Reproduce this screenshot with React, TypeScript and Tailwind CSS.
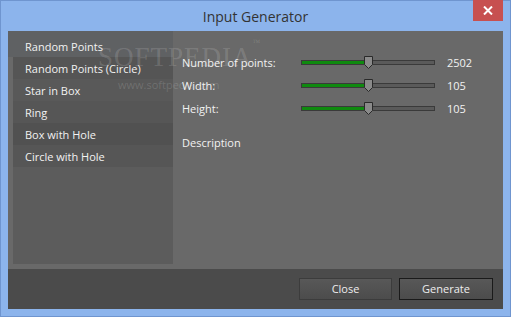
const items = [
  'Random Points (Circle)',
  'Star in Box',
  'Ring',
  'Box with Hole',
  'Circle with Hole',
];

const rowColors = ['bg-[#555555]', 'bg-[#595959]', 'bg-[#565656]', 'bg-[#515151]', 'bg-[#565656]'];

const sliders = [
  { label: 'Number of points:', value: '2502' },
  { label: 'Width:', value: '105' },
  { label: 'Height:', value: '105' },
];

const Slider = ({ pos }: { pos: number }) => {
  return (
    <div className="relative h-[12px] w-[134px]">
      <div className="absolute left-0 right-0 top-[3px] h-[5px] border border-[#3a3a3a] bg-[#5a5a5a]" />
      <div
        className="absolute left-[1px] top-[4px] h-[3px] bg-[#0f8a0f]"
        style={{ width: pos }}
      />
      <svg
        className="absolute top-[-1px]"
        style={{ left: pos - 3 }}
        width="9"
        height="13"
        viewBox="0 0 9 13"
      >
        <path d="M0.5 0.5 H8.5 V8.5 L4.5 12.5 L0.5 8.5 Z" fill="#8a8a8a" stroke="#2a2a2a" />
      </svg>
    </div>
  );
};

const App = () => {
  return (
    <div
      className="relative flex h-[317px] w-[511px] flex-col border border-[#6f95cf] bg-[#8cb4ec] text-[11px] text-[#f2f2f2]"
      style={{ fontFamily: '"Open Sans", "Noto Sans", sans-serif' }}
    >
      {/* title bar */}
      <div className="relative flex h-[30px] items-center justify-center">
        <span className="text-[14px] text-[#333333]">Input Generator</span>
        <div className="absolute right-[7px] top-[-1px] flex h-[21px] w-[30px] items-center justify-center bg-[#c75050]">
          <svg width="10" height="9" viewBox="0 0 10 9">
            <path d="M1 0.5 L9 8.5 M9 0.5 L1 8.5" stroke="#ffffff" strokeWidth="2" />
          </svg>
        </div>
      </div>

      <div className="mx-[7px] flex flex-1 flex-col bg-[#696969]">
        <div className="flex flex-1">
          {/* list */}
          <div className="flex w-[165px] flex-col pb-[5px]">
            <div className="flex h-[26px] items-center bg-[#5f6163] pl-[17px] pt-[6px]">
              Random Points
            </div>
            <div className="ml-[5px] flex flex-1 flex-col bg-[#5c5c5c]">
              {items.map((item, i) => (
                <div key={item} className={`flex h-[22px] items-center pl-[12px] pt-[2px] ${rowColors[i]}`}>
                  {item}
                </div>
              ))}
            </div>
          </div>

          {/* settings */}
          <div className="flex flex-1 flex-col pl-[9px] pt-[20px]">
            {sliders.map((s) => (
              <div key={s.label} className="flex h-[23px] items-center">
                <span className="w-[119px] pt-[1px]">{s.label}</span>
                <Slider pos={66} />
                <span className="ml-[12px] pt-[1px]">{s.value}</span>
              </div>
            ))}
            <div className="mt-[14px] flex h-[18px] items-center">Description</div>
          </div>
        </div>

        {/* footer */}
        <div className="flex h-[40px] items-center justify-end gap-[7px] bg-[#4b4b4b] pr-[10px]">
          <button className="h-[22px] w-[93px] border border-[#3c3c3c] bg-gradient-to-b from-[#585858] to-[#4c4c4c] text-[11px] text-[#eeeeee]">
            Close
          </button>
          <button className="h-[22px] w-[94px] border border-[#1a1a1a] bg-gradient-to-b from-[#585858] to-[#4c4c4c] text-[11px] text-[#eeeeee]">
            Generate
          </button>
        </div>
      </div>
      <div className="h-[7px]" />

      {/* watermark */}
      <div className="pointer-events-none absolute left-[97px] top-[36px] text-[27px] tracking-[1px] text-white/15" style={{ fontFamily: '"Liberation Serif", serif' }}>
        SOFTPEDIA<span className="align-top text-[8px]">™</span>
      </div>
      <div className="pointer-events-none absolute left-[117px] top-[76px] text-[11px] text-white/15">
        www.softpedia.com
      </div>
    </div>
  );
};

export default App;
